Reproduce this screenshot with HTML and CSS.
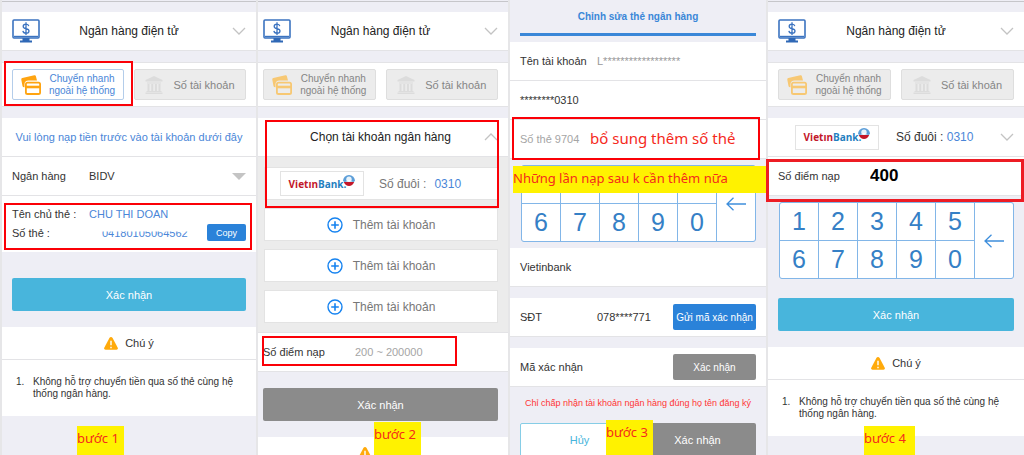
FILE: index.html
```html
<!DOCTYPE html>
<html lang="vi">
<head>
  <meta charset="UTF-8">
  <meta name="viewport" content="width=device-width, initial-scale=1.0">
  <title>Ngân hàng điện tử</title>
  <link rel="stylesheet" href="styles.css">
</head>
<body>
  <svg class="sprite" aria-hidden="true">
    <symbol id="monitor" viewBox="0 0 28 24">
      <rect x="1" y="1" width="26" height="18" rx="1" fill="#fff" stroke="#3b73c0" stroke-width="1.6"/>
      <path d="M2 17.5h24" stroke="#3b73c0" stroke-width="1.4"/>
      <path d="M10.500 19h7v2.500h2.500V23.500H8V21.500h2.500z" fill="#2f68b6"/>
      <path d="M16.800 7.200C16.500 5.800 15.500 5.200 14 5.200c-1.700 0-2.800.8-2.800 2.200 0 3.200 5.800 1.300 5.800 4.500 0 1.500-1.200 2.300-3 2.300s-2.900-.8-3.100-2.300M14 3.300v12.800" fill="none" stroke="#3b73c0" stroke-width="1.300"/>
    </symbol>
    <symbol id="cards" viewBox="0 0 20 20">
      <path d="M1.300 3 13.300.300q1.300-.3 1.600.9L16 5.500H7.500Q3.600 5.500 3.500 9V12.300Q1.800 12.500 1.500 11L.300 4.800Q0 3.300 1.300 3z" fill="currentColor"/>
      <path d="M6.500 7.600h11q1.600 0 1.600 1.600v8.200q0 1.600-1.600 1.600h-11q-1.600 0-1.600-1.600V9.200q0-1.600 1.600-1.600z" fill="none" stroke="currentColor" stroke-width="1.800"/>
      <path d="M5 12h14" stroke="currentColor" stroke-width="2.600"/>
    </symbol>
    <symbol id="bank" viewBox="0 0 18 18">
      <path d="M9 0 17.500 4v1.500H.5V4zM2 6.500h14v1H2zM2.500 8h2v7h-2zM6.200 8h2v7h-2zM9.900 8h2v7h-2zM13.500 8h2v7h-2zM1.500 15h15v1h-15zM.500 16.500h17V18H.5z" fill="#dcdcdc"/>
    </symbol>
    <symbol id="down" viewBox="0 0 14 8">
      <path d="M1 1l6 6 6-6" fill="none" stroke="#c3c3c3" stroke-width="1.300"/>
    </symbol>
    <symbol id="plus" viewBox="0 0 16 16">
      <circle cx="8" cy="8" r="7" fill="none" stroke="#1683f0" stroke-width="1.400"/>
      <path d="M8 4.200v7.600M4.200 8h7.600" stroke="#1683f0" stroke-width="1.600"/>
    </symbol>
    <symbol id="warn" viewBox="0 0 14 13">
      <path d="M7 0q1 0 1.600 1l5 9.500q1 2-1.100 2.300h-11Q-.6 12.500.4 10.500L5.400 1Q6 0 7 0z" fill="#ffaa0b"/>
      <path d="M7 3.800v4.400M7 9.700v1.500" stroke="#fff" stroke-width="1.400"/>
    </symbol>
    <symbol id="back" viewBox="0 0 20 14">
      <path d="M20 7H1M7.500.7 1 7l6.500 6.300" fill="none" stroke="#3f8fdc" stroke-width="1.300"/>
    </symbol>
    <symbol id="globe" viewBox="0 0 12 12">
      <path d="M0 7A6 6 0 0 1 12 7L10.500 8h-9z" fill="#5c9ed8"/>
      <circle cx="6" cy="5.300" r="2.700" fill="#e8f3fb"/>
      <path d="M2 7.500 6 6l4 1.500z" fill="#fff"/>
      <path d="M.8 8h10.400Q9.500 12 6 12T.8 8z" fill="#c3172a"/>
    </symbol>
  </svg>

  <main class="board">
    <!-- Bước 1 -->
    <section class="screen">
      <div class="topline"></div>
      <button class="row method">
        <svg class="i-monitor"><use href="#monitor"/></svg>
        <span class="title">Ngân hàng điện tử</span>
        <svg class="i-chevron"><use href="#down"/></svg>
      </button>
      <div class="tabs">
        <button class="tab transfer active"><svg class="i-cards"><use href="#cards"/></svg><span>Chuyển nhanh<br>ngoài hệ thống</span></button>
        <button class="tab"><svg class="i-bank"><use href="#bank"/></svg><span>Số tài khoản</span></button>
      </div>
      <p class="row hint">Vui lòng nạp tiền trước vào tài khoản dưới đây</p>
      <div class="row">
        <label class="name" for="bank-name">Ngân hàng</label>
        <select id="bank-name" class="bank-select"><option>BIDV</option></select>
        <span class="caret"></span>
      </div>
      <div class="holder">
        <div class="pair"><span class="name">Tên chủ thẻ :</span><span class="blue">CHU THI DOAN</span></div>
        <div class="pair"><span class="name">Số thẻ :</span><span class="card-number">04180105064562</span><button class="copy">Copy</button></div>
      </div>
      <button class="confirm">Xác nhận</button>
      <div class="notice">
        <h2><svg class="i-warn"><use href="#warn"/></svg>Chú ý</h2>
        <ol><li>Không hỗ trợ chuyển tiền qua số thẻ cùng hệ thống ngân hàng.</li></ol>
      </div>
      <div class="mark mark-tab"></div>
      <div class="mark mark-holder"></div>
      <strong class="step step-1">bước 1</strong>
    </section>

    <!-- Bước 2 -->
    <section class="screen narrow">
      <div class="topline"></div>
      <button class="row method">
        <svg class="i-monitor"><use href="#monitor"/></svg>
        <span class="title">Ngân hàng điện tử</span>
        <svg class="i-chevron"><use href="#down"/></svg>
      </button>
      <div class="tabs">
        <button class="tab transfer"><svg class="i-cards"><use href="#cards"/></svg><span>Chuyển nhanh<br>ngoài hệ thống</span></button>
        <button class="tab"><svg class="i-bank"><use href="#bank"/></svg><span>Số tài khoản</span></button>
      </div>
      <button class="row method">
        <span class="title">Chọn tài khoản ngân hàng</span>
        <svg class="i-chevron up"><use href="#down"/></svg>
      </button>
      <div class="accounts">
        <button class="account linked">
          <span class="logo"><span class="vietin">Vietın</span><span class="bank">Bank.</span><svg class="i-globe"><use href="#globe"/></svg></span>
          <span>Số đuôi :</span><span class="blue">0310</span>
        </button>
        <button class="account"><svg class="i-plus"><use href="#plus"/></svg>Thêm tài khoản</button>
        <button class="account"><svg class="i-plus"><use href="#plus"/></svg>Thêm tài khoản</button>
        <button class="account"><svg class="i-plus"><use href="#plus"/></svg>Thêm tài khoản</button>
      </div>
      <div class="row">
        <label class="name wide" for="points">Số điểm nạp</label>
        <input id="points" type="text" placeholder="200 ~ 200000">
      </div>
      <button class="confirm disabled">Xác nhận</button>
      <div class="notice">
        <h2 class="icon-only" aria-label="Chú ý"><svg class="i-warn"><use href="#warn"/></svg></h2>
      </div>
      <div class="mark mark-account"></div>
      <div class="mark mark-points"></div>
      <strong class="step step-2">bước 2</strong>
    </section>

    <!-- Bước 3 -->
    <section class="screen">
      <h1 class="edit-title">Chỉnh sửa thẻ ngân hàng</h1>
      <div class="row"><span class="name">Tên tài khoản</span><span class="muted">L******************</span></div>
      <div class="row">********0310</div>
      <div class="row"><input id="card" type="text" placeholder="Số thẻ 9704" aria-label="Số thẻ"></div>
      <div class="keypad">
        <button aria-label="1"></button><button aria-label="2"></button><button aria-label="3"></button><button aria-label="4"></button><button aria-label="5"></button>
        <button class="erase" aria-label="Xóa"><svg class="i-back"><use href="#back"/></svg></button>
        <button>6</button><button>7</button><button>8</button><button>9</button><button>0</button>
      </div>
      <div class="row gap-below">Vietinbank</div>
      <div class="row gap-below"><span class="name">SĐT</span><span class="phone">078****771</span><button class="code">Gửi mã xác nhận</button></div>
      <div class="row"><label class="name" for="code">Mã xác nhận</label><input id="code" type="text"><button class="code disabled">Xác nhận</button></div>
      <p class="error">Chỉ chấp nhận tài khoản ngân hàng đúng họ tên đăng ký</p>
      <div class="actions">
        <button class="cancel">Hủy</button>
        <button class="ok">Xác nhận</button>
      </div>
      <div class="mark mark-card"></div>
      <span class="note-card">bổ sung thêm số thẻ</span>
      <span class="note-later">Những lần nạp sau k cần thêm nữa</span>
      <strong class="step step-3">bước 3</strong>
    </section>

    <!-- Bước 4 -->
    <section class="screen">
      <div class="topline"></div>
      <button class="row method">
        <svg class="i-monitor"><use href="#monitor"/></svg>
        <span class="title">Ngân hàng điện tử</span>
        <svg class="i-chevron"><use href="#down"/></svg>
      </button>
      <div class="tabs">
        <button class="tab transfer"><svg class="i-cards"><use href="#cards"/></svg><span>Chuyển nhanh<br>ngoài hệ thống</span></button>
        <button class="tab"><svg class="i-bank"><use href="#bank"/></svg><span>Số tài khoản</span></button>
      </div>
      <button class="row selected">
        <span class="logo"><span class="vietin">Vietın</span><span class="bank">Bank.</span><svg class="i-globe"><use href="#globe"/></svg></span>
        <span>Số đuôi : <span class="blue">0310</span></span>
        <svg class="i-chevron"><use href="#down"/></svg>
      </button>
      <div class="row">
        <label class="name wide" for="amount">Số điểm nạp</label>
        <input id="amount" class="amount" type="text" value="400">
      </div>
      <div class="keypad">
        <button>1</button><button>2</button><button>3</button><button>4</button><button>5</button>
        <button class="erase" aria-label="Xóa"><svg class="i-back"><use href="#back"/></svg></button>
        <button>6</button><button>7</button><button>8</button><button>9</button><button>0</button>
      </div>
      <button class="confirm after-pad">Xác nhận</button>
      <div class="notice">
        <h2><svg class="i-warn"><use href="#warn"/></svg>Chú ý</h2>
        <ol><li>Không hỗ trợ chuyển tiền qua số thẻ cùng hệ thống ngân hàng.</li></ol>
      </div>
      <div class="mark mark-amount"></div>
      <strong class="step step-4">bước 4</strong>
    </section>
  </main>
</body>
</html>
```
FILE: styles.css
```css
* {
  box-sizing: border-box;
}
body {
  margin: 0;
  font-family: "Liberation Sans", Arial, sans-serif;
  font-size: 11px;
  color: #333;
  background-color: #e6e6e8;
}
h1, h2, p, ol {
  margin: 0;
  padding: 0;
  font-weight: normal;
}
button, input, select {
  font: inherit;
  color: inherit;
  border: 0;
  padding: 0;
  margin: 0;
  border-radius: 0;
  background: none;
}
button {
  cursor: pointer;
}
svg {
  display: block;
  flex: none;
}
.sprite {
  position: absolute;
  width: 0;
  height: 0;
}
.board {
  display: grid;
  grid-template-columns: 254fr 250fr 256fr 256fr;
  gap: 2px;
  padding-left: 2px;
  height: 100vh;
  overflow: hidden;
}
.screen {
  --left: 10px;
  --right: 10px;
  position: relative;
  display: flex;
  flex-direction: column;
  min-width: 0;
  background-color: #eeeef5;
}
.narrow {
  --left: 5px;
}
.topline {
  height: 2px;
  flex: none;
  margin-bottom: 10px;
  border-bottom: 1px solid #c6c6ca;
}
.row {
  display: flex;
  align-items: center;
  flex: none;
  width: 100%;
  height: 39px;
  padding: 0 var(--right) 0 var(--left);
  background-color: white;
  border-bottom: 1px solid #e3e3e6;
}
.method {
  display: grid;
  grid-template-columns: 28px 1fr 28px;
}
.method .title {
  grid-column: 2;
}
.method .i-chevron {
  justify-self: end;
}
.blue {
  color: #4a86d8;
}
.muted {
  color: #999;
}
.name {
  flex: none;
  width: 77px;
}
.wide {
  width: 92px;
}
.title {
  text-align: center;
  font-size: 12px;
  color: #222;
}
.i-monitor {
  width: 28px;
  height: 24px;
}
.i-chevron {
  width: 14px;
  height: 8px;
}
.up {
  transform: rotate(180deg);
}

/* tabs */
.tabs {
  display: grid;
  grid-template-columns: 1fr 1fr;
  gap: 10px;
  flex: none;
  margin: 11px 0;
  padding: 6px var(--right) 6px var(--left);
  background-color: white;
  border-top: 1px solid #e3e3e6;
  border-bottom: 1px solid #e3e3e6;
}
.tab {
  display: flex;
  align-items: center;
  justify-content: center;
  gap: 10px;
  height: 31px;
  line-height: 12px;
  color: #858585;
  background-color: #ececec;
  border: 1px solid #dedede;
  border-radius: 2px;
}
.transfer {
  gap: 8px;
  font-size: 10px;
}
.tab.active {
  color: #4a86d8;
  background-color: white;
  border-color: #b4cdea;
}
.i-cards {
  width: 20px;
  height: 20px;
  color: #f7c873;
}
.active .i-cards {
  color: #ffa411;
}
.i-bank {
  width: 18px;
  height: 18px;
}

/* bank and card holder */
.hint {
  justify-content: center;
  white-space: nowrap;
  color: #4a86d8;
}
.bank-select {
  flex: 1;
  appearance: none;
}
.caret {
  border: 7px solid transparent;
  border-top-color: #c4c4c4;
  border-bottom: 0;
}
.holder {
  display: flex;
  flex-direction: column;
  padding: 8px var(--right) 10px var(--left);
  background-color: white;
}
.pair {
  display: flex;
  align-items: center;
  height: 19px;
}
.card-number {
  flex: 1;
  padding-left: 13px;
  color: #4a86d8;
  clip-path: inset(5px 0 0 0);
}
.copy {
  width: 39px;
  height: 17px;
  color: white;
  font-size: 9px;
  background-color: #2a82d9;
  border-radius: 2px;
}
.confirm {
  flex: none;
  height: 33px;
  margin: 26px var(--right) 16px var(--left);
  color: white;
  background-color: #48b5dc;
  border-radius: 2px;
}
.confirm.disabled {
  margin-top: 16px;
}
.confirm.after-pad {
  margin-top: 13px;
}
.confirm.disabled,
.code.disabled,
.ok {
  background-color: #8b8b8b;
}

/* notice */
.notice {
  flex: none;
  background-color: white;
}
.notice h2 {
  display: flex;
  align-items: center;
  justify-content: center;
  gap: 7px;
  height: 33px;
  font-size: 11px;
  border-bottom: 1px solid #e3e3e6;
}
.notice .icon-only {
  padding-right: 36px;
}
.i-warn {
  width: 14px;
  height: 13px;
}
.notice ol {
  padding: 16px 12px 16px 25px;
  line-height: 12px;
  font-size: 10px;
}
.notice li {
  padding-left: 6px;
}

/* accounts */
.accounts {
  display: flex;
  flex-direction: column;
  gap: 8px;
  padding: 10px var(--right) 9px 6px;
  background-color: #ececec;
  border-bottom: 1px solid #e3e3e6;
}
.account {
  display: flex;
  align-items: center;
  justify-content: center;
  gap: 10px;
  height: 33px;
  font-size: 12px;
  color: #777;
  background-color: white;
  border: 1px solid #e3e3e3;
}
.linked {
  justify-content: flex-start;
  gap: 8px;
  padding-left: 15px;
}
.linked .logo {
  margin-right: 7px;
}
.i-plus {
  width: 16px;
  height: 16px;
}
.logo {
  display: flex;
  align-items: center;
  justify-content: center;
  flex: none;
  width: 84px;
  height: 25px;
  font-family: "Open Sans", sans-serif;
  font-size: 10px;
  font-weight: bold;
  border: 1px solid #e3e3e3;
}
.vietin {
  color: #c3172a;
}
.bank {
  color: #1f80c0;
}
.i-globe {
  width: 12px;
  height: 12px;
  margin: 0 0 8px -3px;
}
.selected {
  gap: 17px;
  padding-left: 27px;
  font-size: 12px;
}
.selected .i-chevron {
  margin-left: auto;
}

input {
  flex: 1;
  min-width: 0;
  height: 24px;
}
input::placeholder {
  color: #a5a5a5;
  opacity: 1;
}
.amount {
  font-size: 17px;
  font-weight: bold;
  color: black;
}

/* keypad */
.keypad {
  display: grid;
  grid-template-columns: repeat(6, 1fr);
  grid-template-rows: 37px 37px;
  gap: 1px;
  flex: none;
  margin: 6px var(--right) 6px 11px;
  background-color: #82b6e8;
  border: 1px solid #82b6e8;
  border-radius: 3px;
  overflow: hidden;
}
.keypad button {
  font-size: 25px;
  color: #3580c6;
  background-color: white;
}
.keypad .erase {
  display: flex;
  align-items: center;
  justify-content: center;
  grid-column: 6;
  grid-row: 1 / 3;
}
.i-back {
  width: 20px;
  height: 14px;
}

/* edit card */
.edit-title {
  flex: none;
  height: 36px;
  margin: 0 var(--right) 6px var(--left);
  line-height: 34px;
  font-size: 10px;
  font-weight: bold;
  text-align: center;
  color: #3a87d8;
  border-bottom: 3px solid #3a87d8;
}
.gap-below {
  margin-bottom: 11px;
}
.phone {
  flex: 1;
}
.code {
  width: 83px;
  height: 26px;
  color: white;
  font-size: 10px;
  background-color: #2a82d9;
  border-radius: 2px;
}
.error {
  flex: none;
  padding: 10px 0 13px;
  line-height: 13px;
  font-size: 9px;
  text-align: center;
  white-space: nowrap;
  color: #ff3535;
}
.actions {
  display: flex;
  flex: none;
  height: 34px;
  margin: 0 var(--right) 0 var(--left);
}
.actions button {
  flex: 1;
  border-radius: 2px;
}
.cancel {
  color: #48b5dc;
  background-color: white;
  border: 1px solid #86cde6;
}
.actions .ok {
  color: white;
}

/* guide annotations, laid over the screens */
.mark {
  position: absolute;
  border: 2px solid #fb0007;
  pointer-events: none;
}
.mark-tab {
  top: 61px;
  left: 2px;
  width: 129px;
  height: 45px;
}
.mark-holder {
  top: 203px;
  left: 2px;
  right: 4px;
  height: 47px;
}
.mark-account {
  top: 120px;
  left: 7px;
  right: 9px;
  height: 88px;
}
.mark-points {
  top: 336px;
  left: 4px;
  width: 195px;
  height: 30px;
}
.mark-card {
  top: 117px;
  left: 2px;
  right: 6px;
  height: 43px;
}
.mark-amount {
  top: 159px;
  left: -2px;
  right: 0;
  height: 43px;
  border: 3px solid #ed1c24;
}
.note-card,
.note-later,
.step {
  position: absolute;
  font-family: "Noto Sans", sans-serif;
  font-weight: normal;
  white-space: nowrap;
  color: #f52a1c;
}
.note-card {
  top: 127px;
  left: 80px;
  font-size: 15px;
  line-height: 22px;
}
.note-later {
  top: 166px;
  left: 3px;
  right: 0;
  height: 27px;
  font-size: 13px;
  line-height: 24px;
  background-color: #fff200;
}
.step {
  top: 422px;
  width: 47px;
  bottom: 0;
  font-size: 13px;
  line-height: 24px;
  background-color: #fff200;
}
.step-1 {
  top: 426px;
  left: 75px;
  bottom: 4px;
}
.step-2 {
  left: 116px;
}
.step-3 {
  top: 420px;
  left: 96px;
}
.step-4 {
  top: 426px;
  left: 96px;
  width: 51px;
}
```
